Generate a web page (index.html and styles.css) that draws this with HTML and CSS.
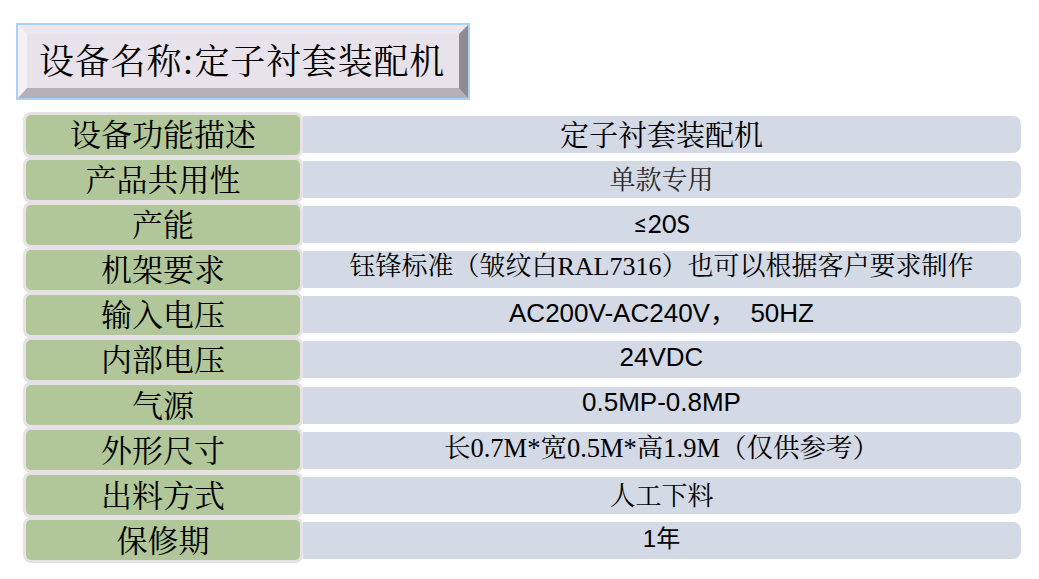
FILE: index.html
```html
<!DOCTYPE html>
<html lang="zh-CN">
<head>
<meta charset="utf-8">
<title>设备名称:定子衬套装配机</title>
<link rel="stylesheet" href="styles.css">
</head>
<body>
<div class="page">
  <div class="title-ring">
    <h1 class="title">设备名称:定子衬套装配机</h1>
  </div>
  <div class="spec">
    <div class="label">设备功能描述</div>
    <div class="value v-cjk29">定子衬套装配机</div>
    <div class="label">产品共用性</div>
    <div class="value v-cjk26 v-gray">单款专用</div>
    <div class="label">产能</div>
    <div class="value v-lato">≤20S</div>
    <div class="label">机架要求</div>
    <div class="value v-mixed26 v-up">钰锋标准（皱纹白RAL7316）也可以根据客户要求制作</div>
    <div class="label">输入电压</div>
    <div class="value v-sans26">AC200V-AC240V，&nbsp;&nbsp;50HZ</div>
    <div class="label">内部电压</div>
    <div class="value v-sans26 v-up">24VDC</div>
    <div class="label">气源</div>
    <div class="value v-sans26 v-up">0.5MP-0.8MP</div>
    <div class="label">外形尺寸</div>
    <div class="value v-serif">长0.7M*宽0.5M*高1.9M（仅供参考）</div>
    <div class="label">出料方式</div>
    <div class="value v-cjk26">人工下料</div>
    <div class="label">保修期</div>
    <div class="value v-sans24">1年</div>
  </div>
</div>
</body>
</html>
```

FILE: styles.css
```css
html, body {
  margin: 0;
  padding: 0;
  background: #ffffff;
}

body {
  font-family: "Noto Serif CJK SC", "Noto Sans CJK SC", sans-serif;
  color: #000000;
}

.page {
  width: 1039px;
  height: 579px;
  overflow: hidden;
  padding-top: 25px;
  box-sizing: border-box;
}

.title-ring {
  margin-left: 18px;
  width: 450px;
  box-sizing: border-box;
  box-shadow: 0 0 0 2px #a9d0f6;
}

.title {
  margin: 0;
  height: 73px;
  box-sizing: border-box;
  border-style: solid;
  border-width: 9px 9px 10px 9px;
  border-color: #ebe7ed #8f8b91 #b6b1b8 #f3f1f5;
  background: #e8e3ea;
  padding-left: 12px;
  font-size: 35px;
  font-weight: 400;
  line-height: 51px;
  letter-spacing: 0.8px;
  white-space: nowrap;
}

.spec {
  margin-top: 18px;
  margin-left: 26px;
  display: grid;
  grid-template-columns: 274px 718px;
  grid-auto-rows: 37px;
  column-gap: 2.5px;
  row-gap: 8.1px;
}

.label {
  margin: -1.5px 0;
  padding-bottom: 4px;
  box-sizing: border-box;
  background: #b1c799;
  border-radius: 5px;
  box-shadow: 0 0 0 3px #e5e1e7;
  display: flex;
  align-items: center;
  justify-content: center;
  font-size: 31px;
  line-height: 1;
  white-space: nowrap;
}

.value {
  background: #d3d9e5;
  border-radius: 0 8px 8px 0;
  box-sizing: border-box;
  padding-bottom: 3px;
  display: flex;
  align-items: center;
  justify-content: center;
  line-height: 1;
  white-space: nowrap;
}

.v-up { padding-bottom: 6px; }

.v-cjk29 { font-size: 29px; }
.v-cjk26 { font-size: 26px; }
.v-gray { color: #2a2a2a; }

.v-mixed26 {
  font-family: "Liberation Serif", "Noto Serif CJK SC", "Noto Sans CJK SC", serif;
  font-size: 26px;
}

.v-lato {
  font-family: Lato, "Noto Sans CJK SC", sans-serif;
  font-size: 25px;
}

.v-sans26 {
  font-family: "Liberation Sans", "Noto Sans CJK SC", sans-serif;
  font-size: 26px;
}

.v-sans24 {
  font-family: "Liberation Sans", "Noto Sans CJK SC", sans-serif;
  font-size: 24px;
}

.v-serif {
  font-family: "Liberation Serif", "Noto Serif CJK SC", "Noto Sans CJK SC", serif;
  font-size: 26.5px;
}
```
